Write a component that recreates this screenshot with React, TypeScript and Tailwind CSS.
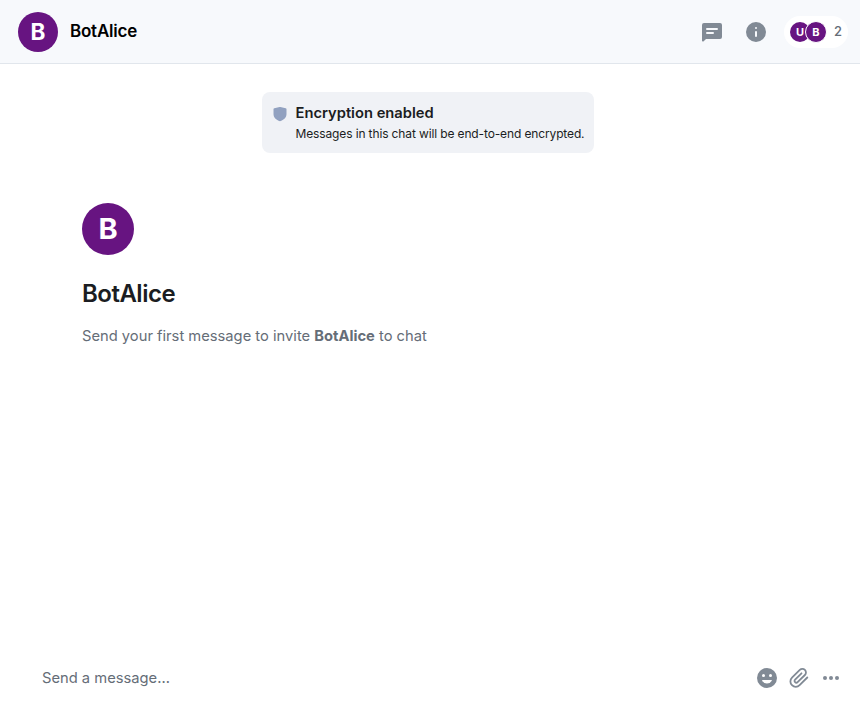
import React from 'react';

const FONT = "font-['Inter','Liberation_Sans',sans-serif]";

function Avatar({ letter, className }: { letter: string; className: string }) {
  return (
    <span
      className={`flex shrink-0 items-center justify-center rounded-full bg-[#671481] font-bold text-white font-['Inter',sans-serif] ${className}`}
    >
      {letter}
    </span>
  );
}

function ThreadsIcon() {
  return (
    <svg className="h-6 w-6" viewBox="0 0 24 24" fill="#818a95">
      <path
        fillRule="evenodd"
        d="M4 3h16a2 2 0 0 1 2 2v12a2 2 0 0 1-2 2H6l-2.3 2.3c-.63.63-1.7.18-1.7-.7V5a2 2 0 0 1 2-2Zm3 5a1 1 0 0 0 0 2h10a1 1 0 1 0 0-2H7Zm0 4a1 1 0 1 0 0 2h6a1 1 0 1 0 0-2H7Z"
      />
    </svg>
  );
}

function InfoIcon() {
  return (
    <svg className="h-6 w-6" viewBox="0 0 24 24" fill="#818a95">
      <path
        fillRule="evenodd"
        d="M12 22a10 10 0 1 0 0-20 10 10 0 0 0 0 20Zm0-15a1 1 0 1 1 0 2 1 1 0 0 1 0-2Zm0 4a1 1 0 0 1 1 1v4a1 1 0 1 1-2 0v-4a1 1 0 0 1 1-1Z"
      />
    </svg>
  );
}

function ShieldIcon() {
  return (
    <svg className="h-4 w-4" viewBox="0 0 16 16" fill="#91a1c0">
      <path d="M1.500 3.200c0-.5.3-.8.8-.9L7.600 1.100a2 2 0 0 1 .8 0l5.300 1.200c.5.1.8.4.8.9V8c0 3.500-2.600 6-6.500 7.300C4.100 14 1.500 11.500 1.500 8V3.200Z" />
    </svg>
  );
}

function EmojiIcon() {
  return (
    <svg className="h-6 w-6" viewBox="0 0 24 24" fill="#818a95">
      <path
        fillRule="evenodd"
        d="M12 22a10 10 0 1 0 0-20 10 10 0 0 0 0 20ZM8.500 8a1.500 1.500 0 1 1 0 3 1.500 1.500 0 0 1 0-3Zm7 0a1.500 1.500 0 1 1 0 3 1.500 1.500 0 0 1 0-3ZM7.600 14h8.800c.4 0 .62.36.45.7a5.600 5.600 0 0 1-9.700 0c-.17-.34.05-.7.45-.7Z"
      />
    </svg>
  );
}

function AttachmentIcon() {
  return (
    <svg className="h-6 w-6" viewBox="0 0 24 24" fill="none" stroke="#818a95" strokeWidth="1.800" strokeLinecap="round" strokeLinejoin="round">
      <path d="m20.300 11.500-7.700 7.700a5.300 5.300 0 0 1-7.600 0 5.300 5.300 0 0 1 0-7.600l7.800-7.700a3.600 3.600 0 0 1 5.100 0 3.600 3.600 0 0 1 0 5.100l-7.300 7.200a1.700 1.700 0 0 1-2.500 0 1.700 1.700 0 0 1 0-2.500l6.400-6.400" />
    </svg>
  );
}

function MoreIcon() {
  return (
    <svg className="h-6 w-6" viewBox="0 0 24 24" fill="#818a95">
      <circle cx="6" cy="12" r="2" />
      <circle cx="12" cy="12" r="2" />
      <circle cx="18" cy="12" r="2" />
    </svg>
  );
}

export default function App() {
  return (
    <div className={`flex h-[720px] w-[860px] flex-col bg-white text-[#1b1d22] ${FONT}`}>
      <header className="flex h-16 shrink-0 items-center border-b border-[#e1e6ec] bg-[#f7f9fc] pr-3 pl-[18px]">
        <Avatar letter="B" className="h-10 w-10 pt-px text-[22.500px]" />
        <h1 className="mb-0.5 ml-3 flex-1 text-[17px] leading-6 font-semibold tracking-[-0.22px] text-black">BotAlice</h1>
        <div className="flex items-center gap-5">
          <ThreadsIcon />
          <InfoIcon />
        </div>
        <div className="ml-4 flex h-8 w-16 items-center rounded-full bg-white pl-1.5">
          <Avatar letter="U" className="h-5 w-5 pt-px text-[11px]" />
          <Avatar letter="B" className="-ml-[5px] h-[22px] w-[22px] border border-white pt-px text-[11px]" />
          <span className="ml-[7px] text-[13px] font-medium text-[#656d77]">2</span>
        </div>
      </header>

      <main className="flex flex-1 flex-col">
        <section className="mt-7 ml-[262px] flex h-[61px] w-[332px] rounded-lg bg-[#f0f2f6] pt-[11px] pl-2.5">
          <span className="mt-[3px] mr-[7.500px]">
            <ShieldIcon />
          </span>
          <div className="whitespace-nowrap">
            <h2 className="text-[14.720px] leading-5 font-semibold">Encryption enabled</h2>
            <p className="text-[12px] leading-[22px] tracking-[-0.13px]">Messages in this chat will be end-to-end encrypted.</p>
          </div>
        </section>

        <section className="mt-[50px] ml-[82px]">
          <Avatar letter="B" className="h-[52px] w-[52px] text-[29px]" />
          <h2 className="mt-6 text-[24px] leading-[30px] font-semibold tracking-[-0.5px]">BotAlice</h2>
          <p className="mt-[15px] text-[14.720px] leading-6 text-[#656d77]">
            Send your first message to invite <b className="font-bold">BotAlice</b> to chat
          </p>
        </section>
      </main>

      <footer className="mb-[30px] flex h-6 items-center pr-[17px] pl-[42px]">
        <p className="flex-1 text-[14.720px] leading-6 text-[#656d77]">Send a message…</p>
        <div className="flex gap-2">
          <EmojiIcon />
          <AttachmentIcon />
          <MoreIcon />
        </div>
      </footer>
    </div>
  );
}
